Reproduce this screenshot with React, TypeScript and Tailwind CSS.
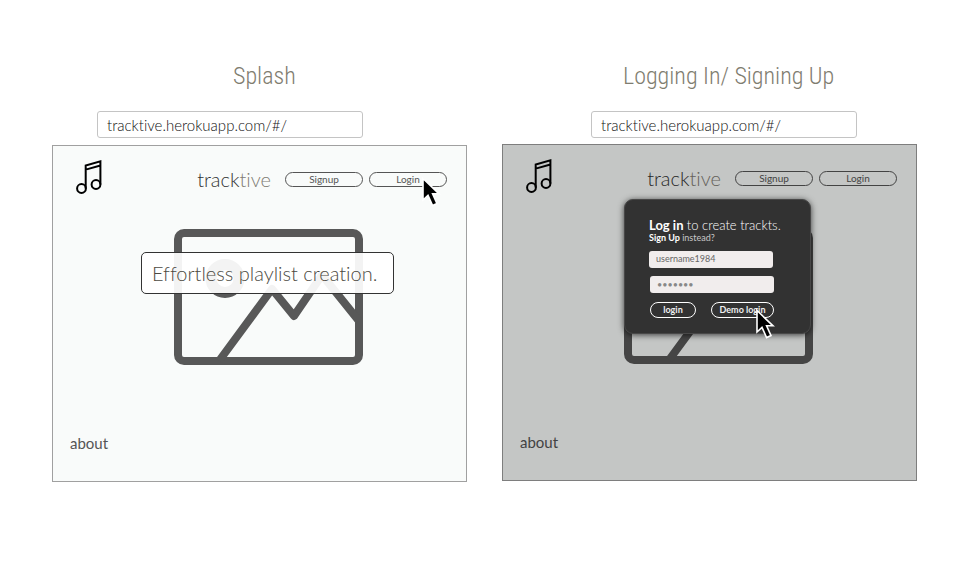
import React from "react";

function MusicIcon() {
  return (
    <svg viewBox="0 0 26 34" className="h-[34px] w-[26px] shrink-0" fill="none" stroke="#000" strokeWidth="2" aria-hidden="true">
      <circle cx="5.5" cy="28.5" r="4.4" />
      <circle cx="20" cy="24.5" r="4.4" />
      <path d="M9.7 28.5V5.5L24.4 1.4V24.5M9.7 9.6L24.4 5.5" />
    </svg>
  );
}

function Cursor() {
  return (
    <svg viewBox="0 0 20 32" className="h-8 w-5" aria-hidden="true">
      <path
        d="M2 2.5V24L7 19.4L11.6 29.6L16 27.6L11.6 17.8H18Z"
        fill="#000"
        stroke="#fff"
        strokeWidth="1.6"
      />
    </svg>
  );
}

function Placeholder() {
  return (
    <svg viewBox="0 0 189 136" className="h-[136px] w-[189px]" fill="none" stroke="#585858" strokeWidth="8" aria-hidden="true">
      <rect x="4" y="4" width="181" height="128" rx="6" />
      <circle cx="51" cy="49.5" r="14" strokeWidth="11" />
      <path d="M45 132L98 60L120 87L148 46L185 92" strokeLinejoin="round" />
    </svg>
  );
}

function Pill({ children }: { children: React.ReactNode }) {
  return (
    <button className="h-[15px] w-[78px] rounded-full border border-[#555] text-center text-[10px] leading-[13px] text-[#555]">
      {children}
    </button>
  );
}

type FrameProps = {
  headClass: string;
  urlClass: string;
  title: string;
  dimmed?: boolean;
  navOverlay?: React.ReactNode;
  children: React.ReactNode;
};

function Frame({ headClass, urlClass, title, dimmed, navOverlay, children }: FrameProps) {
  return (
    <section className="min-w-0">
      <h2 className={`font-['Roboto_Condensed','Lato',sans-serif] text-2xl leading-8 font-light text-[#7f7d70] ${headClass}`}>
        {title}
      </h2>
      <div className={urlClass}>
        <input
          aria-label="Address"
          defaultValue="tracktive.herokuapp.com/#/"
          className="block h-[27px] w-[266px] rounded-[3px] border border-[#c4c4c4] bg-white px-[9px] text-[15px] leading-5 font-light text-[#111]"
        />
      </div>
      <div className="relative border border-[#a0a0a0] bg-[#f9fbfa]">
        <header className="flex items-start justify-between pt-[14px] pr-[19px] pl-[23px]">
          <MusicIcon />
          <nav className="relative mt-[7px] flex items-center">
            <span className="mr-[14px] text-xl leading-6 font-light text-[#333]">
              track<span className="text-[#7f7b74]">tive</span>
            </span>
            <div className="flex gap-[6px]">
              <Pill>Signup</Pill>
              <Pill>Login</Pill>
            </div>
            {navOverlay}
          </nav>
        </header>
        <div className="mt-[35px] flex justify-center pl-[18px]">
          <div className="relative">
            <Placeholder />
            {children}
          </div>
        </div>
        <footer className="mt-[68px] pb-7 pl-[17px] leading-5">
          <a href="#about" className="text-[15px] text-[#555]">about</a>
        </footer>
        {dimmed && <div className="pointer-events-none absolute -inset-px z-10 bg-black/21" />}
      </div>
    </section>
  );
}

function LoginDialog() {
  return (
    <form className="absolute top-[-29px] left-0 z-20 h-[135px] w-[187px] rounded-[9px] border border-[#484848] bg-[#323232] px-6 pt-[17px] shadow-[0_1px_6px_rgba(0,0,0,0.7)]">
      <p className="text-[13px] leading-4 whitespace-nowrap text-white">
        <b>Log in</b> <span className="font-light">to create trackts.</span>
      </p>
      <p className="text-[9px] leading-[10px] whitespace-nowrap text-[#c8c8c8]">
        <a href="#signup" className="font-bold text-white">Sign Up</a> instead?
      </p>
      <input
        aria-label="Username"
        defaultValue="username1984"
        className="mt-2 block h-[17px] w-[124px] rounded-[3px] bg-[#f1eded] px-[7px] pb-[2px] text-[9px] leading-3 text-[#666]"
      />
      <input
        aria-label="Password"
        type="password"
        defaultValue="1234567"
        className="mt-2 ml-px block h-[17px] w-[124px] rounded-[3px] bg-[#f1eded] px-[7px] text-[9px] leading-3 text-[#888]"
      />
      <div className="mt-[9px] ml-px flex w-[124px] justify-between">
        <button className="h-4 w-[46px] rounded-full border border-white text-[9px] leading-[14px] font-bold text-[#eee]">login</button>
        <button className="h-4 w-[63px] rounded-full border border-white text-[9px] leading-[14px] font-bold whitespace-nowrap text-[#eee]">Demo login</button>
      </div>
      <div className="pointer-events-none absolute top-[108px] left-[130px]">
        <Cursor />
      </div>
    </form>
  );
}

export default function App() {
  return (
    <main className="grid min-h-screen grid-cols-2 content-start gap-[35px] bg-white pt-[60px] pr-[53px] pl-[52px] font-['Lato',sans-serif] [font-variant-ligatures:none]">
      <Frame
        title="Splash"
        headClass="pl-[181px]"
        urlClass="mt-[19px] mb-[7px] pl-[45px]"
        navOverlay={
          <div className="pointer-events-none absolute top-[9px] right-[6px]">
            <Cursor />
          </div>
        }
      >
        <p className="absolute top-[23px] left-[-33px] h-[42px] w-[253px] rounded-[5px] border border-[#333] bg-white/93 pl-[10px] text-xl leading-10 font-light whitespace-nowrap text-[#4c4a42]">
          Effortless playlist creation.
        </p>
      </Frame>
      <Frame
        title="Logging In/ Signing Up"
        headClass="pl-[121px]"
        urlClass="mt-[19px] mb-[6px] pl-[89px]"
        dimmed
      >
        <LoginDialog />
      </Frame>
    </main>
  );
}
